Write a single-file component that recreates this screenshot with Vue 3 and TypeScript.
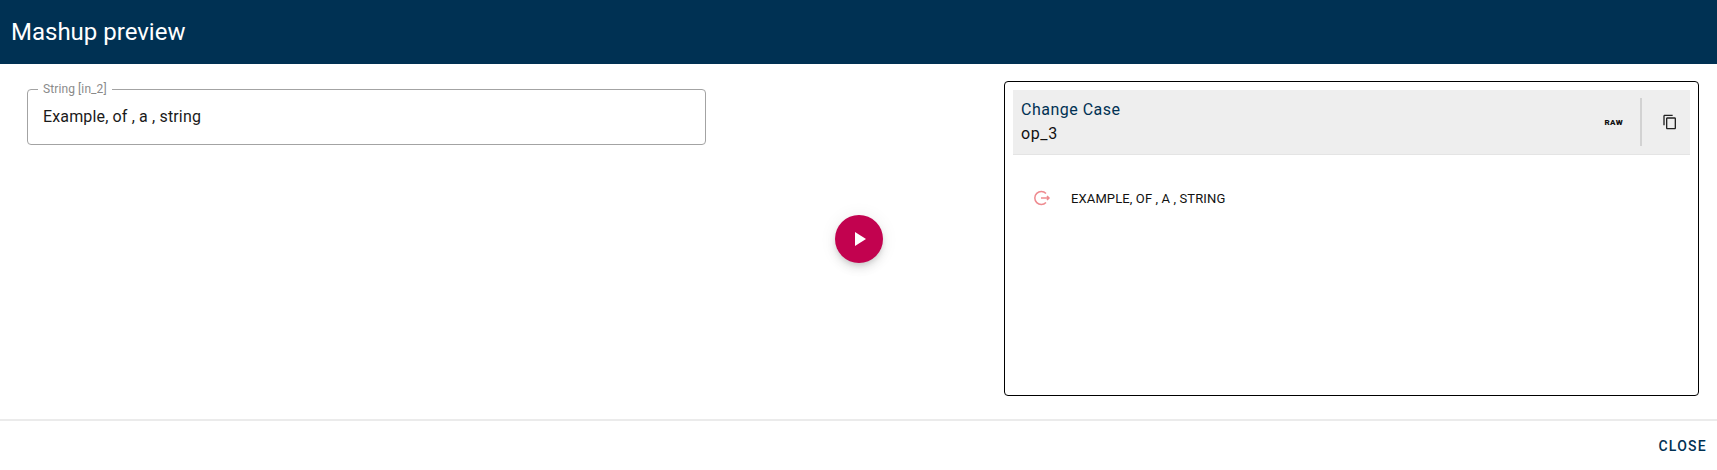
<template>
  <div class="dialog">
    <header class="title-bar">Mashup preview</header>
    <main class="content">
      <section class="inputs">
        <fieldset class="field">
          <legend>String [in_2]</legend>
          <span class="field-value">{{ inputValue }}</span>
        </fieldset>
      </section>
      <div class="run-col">
        <button class="run-btn" type="button" aria-label="Run">
          <svg width="24" height="24" viewBox="0 0 24 24"><path d="M8 5v14l11-7z" fill="#fff" /></svg>
        </button>
      </div>
      <section class="outputs">
        <div class="result">
          <div class="result-head">
            <div class="result-title">
              <div class="op-name">Change Case</div>
              <div class="op-id">op_3</div>
            </div>
            <span class="raw">RAW</span>
            <span class="divider"></span>
            <button class="copy-btn" type="button" aria-label="Copy">
              <svg width="16" height="16" viewBox="0 0 24 24">
                <path fill="#222" d="M16 1H4c-1.100 0-2 .9-2 2v14h2V3h12V1zm3 4H8c-1.100 0-2 .9-2 2v14c0 1.100.9 2 2 2h11c1.100 0 2-.9 2-2V7c0-1.100-.9-2-2-2zm0 16H8V7h11v14z" />
              </svg>
            </button>
          </div>
          <div class="result-row">
            <svg class="out-icon" width="18" height="18" viewBox="0 0 18 18" fill="none" stroke="#ee8a8f" stroke-width="1.500">
              <path d="M13 4.500A6.500 6.500 0 1 0 13 13.500" />
              <path d="M8 9h8M14 7l2 2-2 2" />
            </svg>
            <span class="out-text">{{ outputValue }}</span>
          </div>
        </div>
      </section>
    </main>
    <footer class="actions">
      <button class="close-btn" type="button">CLOSE</button>
    </footer>
  </div>
</template>

<script setup lang="ts">
const inputValue = 'Example, of , a , string'
const outputValue = 'EXAMPLE, OF , A , STRING'
</script>

<style>
html, body {
  margin: 0;
  background: #fff;
}
</style>

<style scoped>
.dialog {
  width: 1717px;
  height: 470px;
  display: flex;
  flex-direction: column;
  font-family: Roboto, "Liberation Sans", sans-serif;
  background: #fff;
  overflow: hidden;
}
.title-bar {
  height: 64px;
  flex: none;
  box-sizing: border-box;
  padding-left: 11px;
  display: flex;
  align-items: center;
  background: #003153;
  color: #fff;
  font-size: 24px;
  font-weight: 400;
}
.content {
  height: 355px;
  flex: none;
  display: grid;
  grid-template-columns: 811px 96px 1fr;
  border-bottom: 2px solid #ebebeb;
}
.inputs {
  padding: 18px 105px 0 27px;
}
.field {
  margin: 0;
  padding: 0 15px;
  height: 63px;
  box-sizing: border-box;
  border: 1px solid #a3a3a3;
  border-radius: 4px;
  display: block;
}
.field legend {
  padding: 0 5px;
  margin-left: -5px;
  font-size: 12px;
  line-height: 14px;
  color: #8a8a8a;
  letter-spacing: .1px;
}
.field-value {
  display: block;
  margin-top: 9px;
  font-size: 16px;
  line-height: 24px;
  letter-spacing: .15px;
  color: #1a1a1a;
}
.run-col {
  display: flex;
  justify-content: center;
  align-items: flex-start;
  padding-top: 151px;
}
.run-btn {
  width: 48px;
  height: 48px;
  padding: 0;
  border: none;
  border-radius: 50%;
  background: #c2024f;
  display: flex;
  align-items: center;
  justify-content: center;
  box-shadow: 0 3px 5px -1px rgba(0,0,0,.12), 0 6px 10px 0 rgba(0,0,0,.08), 0 1px 18px 0 rgba(0,0,0,.07);
}
.outputs {
  padding: 17px 18px 0 97px;
}
.result {
  height: 315px;
  box-sizing: border-box;
  border: 1px solid #000;
  border-radius: 4px;
  padding: 8px;
}
.result-head {
  height: 65px;
  box-sizing: border-box;
  background: #eee;
  border-bottom: 1px solid #e4e4e4;
  display: flex;
  align-items: center;
  padding-left: 8px;
}
.result-title {
  flex: 1;
}
.op-name {
  font-size: 16px;
  line-height: 24px;
  letter-spacing: .5px;
  color: #003153;
}
.op-id {
  font-size: 16px;
  line-height: 24px;
  letter-spacing: .6px;
  color: #111;
}
.raw {
  font-size: 8px;
  font-weight: 900;
  letter-spacing: .35px;
  color: #111;
  margin-right: 17px;
}
.divider {
  width: 2px;
  height: 48px;
  background: #d2d2d2;
}
.copy-btn {
  width: 48px;
  height: 48px;
  padding: 0 0 0 8px;
  border: none;
  background: none;
  display: flex;
  align-items: center;
  justify-content: center;
}
.result-row {
  display: flex;
  align-items: center;
  padding: 34px 0 0 20px;
}
.out-icon {
  flex: none;
}
.out-text {
  margin-left: 20px;
  font-size: 13px;
  font-weight: 400;
  letter-spacing: .12px;
  color: #111;
}
.actions {
  flex: 1;
  display: flex;
  justify-content: flex-end;
  align-items: center;
  padding: 1px 10px 0 0;
}
.close-btn {
  border: none;
  background: none;
  padding: 0;
  font-family: inherit;
  font-size: 14px;
  font-weight: 500;
  letter-spacing: 1.25px;
  color: #003153;
}
</style>
